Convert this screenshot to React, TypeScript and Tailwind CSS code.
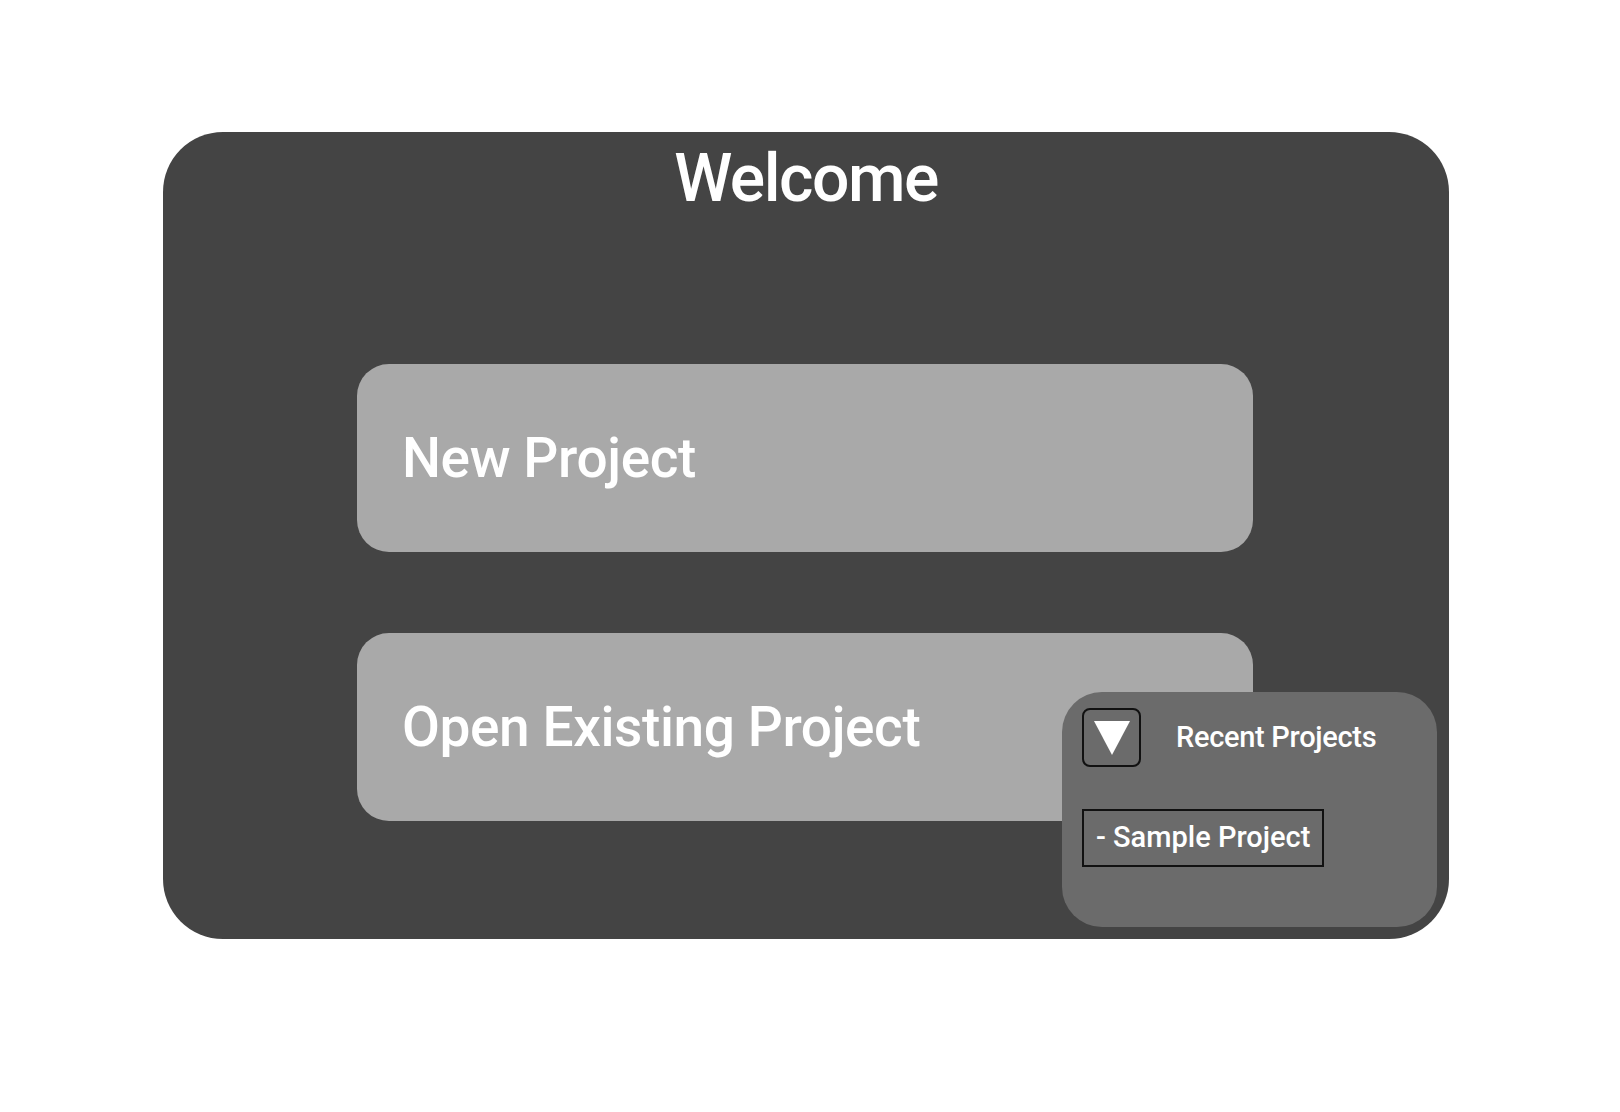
import React from "react";

const font = { fontFamily: "Roboto, 'Liberation Sans', sans-serif" };

export default function App() {
  return (
    <div className="min-h-[1112px] w-[1620px] bg-white" style={font}>
      <div className="pl-[163px] pt-[132px]">
        <div className="relative w-[1286px] h-[807px] rounded-[60px] bg-[#444444]">
          <h1 className="pt-[7px] text-center text-[66px] leading-[80px] font-medium text-white tracking-[-1.5px]">
            Welcome
          </h1>
          <div className="flex flex-col gap-[81px] pl-[194px] pt-[145px]">
            <button className="flex h-[188px] w-[896px] items-center rounded-[32px] bg-[#a9a9a9] pl-[45px] text-left text-[55px] font-medium text-white tracking-[-0.4px]">
              New Project
            </button>
            <button className="flex h-[188px] w-[896px] items-center rounded-[32px] bg-[#a9a9a9] pl-[45px] text-left text-[55px] font-medium text-white tracking-[-0.4px]">
              Open Existing Project
            </button>
          </div>
          <div className="absolute left-[899px] top-[560px] w-[375px] h-[235px] rounded-[40px] bg-[#6b6b6b] pl-[20px] pt-[16px]">
            <div className="flex items-center gap-[35px]">
              <div className="flex h-[59px] w-[59px] items-center justify-center rounded-[8px] border-2 border-[#111111]">
                <svg width="36" height="34" viewBox="0 0 36 34">
                  <polygon points="0,0 36,0 18,34" fill="white" />
                </svg>
              </div>
              <span className="text-[29px] font-medium text-white tracking-[-0.3px]">Recent Projects</span>
            </div>
            <div className="mt-[42px] flex h-[58px] w-[242px] items-center border-2 border-[#111111] pl-[12px] text-[29px] font-medium text-white">
              - Sample Project
            </div>
          </div>
        </div>
      </div>
    </div>
  );
}
